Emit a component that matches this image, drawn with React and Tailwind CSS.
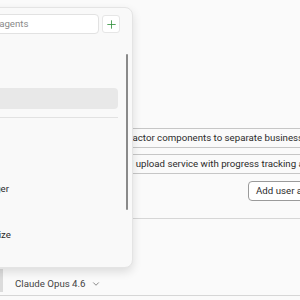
import React from "react";
import { Plus, ChevronDown } from "lucide-react";

const tasks = [
  { text: "Refactor components to separate business logic from views", pad: "pl-[7px]" },
  { text: "Add upload service with progress tracking and retries", pad: "pl-[5px]" },
];

const agents = [
  { label: "Planner", active: false },
  { label: "Reviewer", active: false },
  { label: "Architect", active: true },
];

const moreAgents = [
  { label: "Debugger", w: "w-[120px]" },
  { label: "Optimize", w: "w-[122px]" },
];

function AgentPicker() {
  return (
    <div className="absolute left-[-120px] top-[7px] w-[253px] h-[261px] rounded-[8px] bg-[#f9f9f9] border border-[#e4e4e4] shadow-[0_4px_10px_rgba(0,0,0,0.12)] flex">
      <div className="flex-1 flex flex-col pt-[6px] pl-[8px]">
        {/* search + add */}
        <div className="flex items-center gap-[3px] pr-[6px]">
          <div className="flex-1 h-[20px] bg-white border border-[#e2e2e2] rounded-[4px] flex items-center pl-[77px]">
            <span className="text-[9.7px] text-[#8a8a8a]">Search agents</span>
          </div>
          <button className="w-[18px] h-[18px] bg-white border border-[#e6e6e6] rounded-[3px] flex items-center justify-center">
            <Plus size={13} strokeWidth={1.5} className="text-[#2f8f3a]" />
          </button>
        </div>

        <div className="flex flex-col mt-[9px] pr-[8px]">
          {agents.map((a) => (
            <div
              key={a.label}
              className={`h-[21px] rounded-[4px] flex items-center ${
                a.active ? "bg-[#e8e8e8]" : ""
              } ${a.label === "Reviewer" ? "mb-[2px]" : "mb-[1px]"}`}
            >
              <span className="text-[9.7px] text-[#2b2b2b] pl-[8px]">{a.label}</span>
            </div>
          ))}
          <div className="border-t border-[#e2e2e2] mt-[7px]" />
        </div>

        <div className="flex flex-col pt-[64px] gap-[33px]">
          {moreAgents.map((t) => (
            <div key={t.label} className={`${t.w} text-right text-[9.7px] text-[#2b2b2b] leading-[13px]`}>
              {t.label}
            </div>
          ))}
        </div>
      </div>
      {/* scrollbar */}
      <div className="w-[6px] pt-[46px] pr-[3px]">
        <div className="w-[2px] h-[156px] bg-[#8a8a8a] rounded-full" />
      </div>
    </div>
  );
}

export default function App() {
  return (
    <div className="relative w-[300px] h-[300px] overflow-hidden bg-[#fafafa] font-['Roboto',sans-serif]">
      <div className="flex flex-col w-[300px] h-[300px]">
        <div className="h-[128px]" />
        <div className="pl-[110px] flex flex-col gap-[6px] w-[600px]">
          {tasks.map((t) => (
            <div
              key={t.text}
              className={`h-[20px] border border-[#c6c6c6] flex items-center ${t.pad} text-[9.7px] text-[#2b2b2b] whitespace-nowrap`}
            >
              {t.text}
            </div>
          ))}
          <div className="flex pl-[138px] mt-[1px]">
            <button className="h-[20px] px-[7px] border border-[#9a9a9a] rounded-[4px] bg-white text-[9.7px] text-[#2b2b2b] whitespace-nowrap">
              Add user authentication
            </button>
          </div>
        </div>
        <div className="mt-[17px] border-t border-[#d6d6d6]" />
        <div className="flex-1 flex items-end">
          <div className="flex items-start w-full h-[27px]">
            <div className="w-[3px] h-[23px] mt-[1px] bg-[#dcdcdc]" />
            <div className="flex items-center gap-[5px] pl-[12px] mt-[9px] leading-[14px] text-[9.7px] text-[#444]">
              <span>Claude Opus 4.6</span>
              <ChevronDown size={10} strokeWidth={1.5} />
            </div>
          </div>
        </div>
        <div className="border-t border-[#d6d6d6] mb-[4px]" />
      </div>
      <AgentPicker />
    </div>
  );
}
